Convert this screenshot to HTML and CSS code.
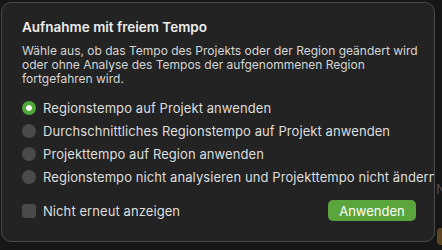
FILE: index.html
```html
<!DOCTYPE html>
<html lang="de">
<head>
<meta charset="utf-8">
<link rel="stylesheet" href="styles.css">
</head>
<body>
<div class="backdrop">
  <span class="bg-letter">N</span>
  <span class="bg-region"></span>
</div>
<div class="dialog">
  <h1 class="title">Aufnahme mit freiem Tempo</h1>
  <p class="desc">Wähle aus, ob das Tempo des Projekts oder der Region geändert wird oder ohne Analyse des Tempos der aufgenommenen Region fortgefahren wird.</p>
  <ul class="options">
    <li class="option"><span class="radio checked"></span><span class="label">Regionstempo auf Projekt anwenden</span></li>
    <li class="option"><span class="radio"></span><span class="label">Durchschnittliches Regionstempo auf Projekt anwenden</span></li>
    <li class="option"><span class="radio"></span><span class="label">Projekttempo auf Region anwenden</span></li>
    <li class="option"><span class="radio"></span><span class="label">Regionstempo nicht analysieren und Projekttempo nicht ändern</span></li>
  </ul>
  <div class="footer">
    <label class="check"><span class="box"></span><span class="label">Nicht erneut anzeigen</span></label>
    <button class="btn">Anwenden</button>
  </div>
</div>
</body>
</html>
```
FILE: styles.css
```css
html, body {
  margin: 0;
  padding: 0;
  background: #161616;
  width: 442px;
  height: 250px;
  overflow: hidden;
  font-family: Inter, "Noto Sans", "Liberation Sans", sans-serif;
}
body {
  position: relative;
}
.backdrop {
  position: absolute;
  inset: 0;
}
.bg-letter {
  position: absolute;
  left: 436px;
  top: 181px;
  font-size: 13px;
  color: #4e4e4e;
}
.bg-region {
  position: absolute;
  left: 437px;
  top: 228px;
  width: 20px;
  height: 17px;
  border-radius: 4px;
  background: #5a4722;
}
.dialog {
  position: relative;
  margin: 2px 0 0 1px;
  width: 432px;
  height: 238px;
  box-sizing: content-box;
  background: #232323;
  border: 1px solid #4a4a4a;
  border-radius: 10px;
  overflow: hidden;
  padding: 0;
  display: flex;
  flex-direction: column;
}
.title {
  margin: 15px 0 0 20px;
  font-size: 13.5px;
  font-weight: 600;
  line-height: 18px;
  color: #ececec;
}
.desc {
  margin: 8px 0 0 20px;
  width: 405px;
  font-size: 12px;
  letter-spacing: 0;
  line-height: 14.2px;
  color: #d6d6d6;
}
.options {
  list-style: none;
  margin: 13px 0 0 20px;
  padding: 0;
  display: flex;
  flex-direction: column;
  gap: 7px;
}
.option {
  display: flex;
  align-items: center;
  gap: 7px;
  height: 16px;
  white-space: nowrap;
}
.label {
  font-size: 13px;
  line-height: 16px;
  letter-spacing: 0.08px;
  color: #dedede;
}
.radio {
  flex: none;
  width: 14px;
  height: 14px;
  border-radius: 50%;
  background: #4a4a4a;
  box-sizing: border-box;
}
.radio.checked {
  background: #4fa83a radial-gradient(circle, #ffffff 0 2.6px, transparent 3.2px);
}
.footer {
  margin: 15.5px 0 0 20px;
  width: 394px;
  display: flex;
  justify-content: space-between;
  align-items: center;
}
.check {
  display: flex;
  align-items: center;
  gap: 7px;
}
.box {
  width: 14px;
  height: 14px;
  border-radius: 3px;
  background: #4a4a4a;
}
.btn {
  width: 88px;
  height: 21px;
  border: none;
  border-radius: 5px;
  background: #5aa53c;
  color: #ffffff;
  font-family: inherit;
  font-size: 13px;
  padding: 0;
}
```
